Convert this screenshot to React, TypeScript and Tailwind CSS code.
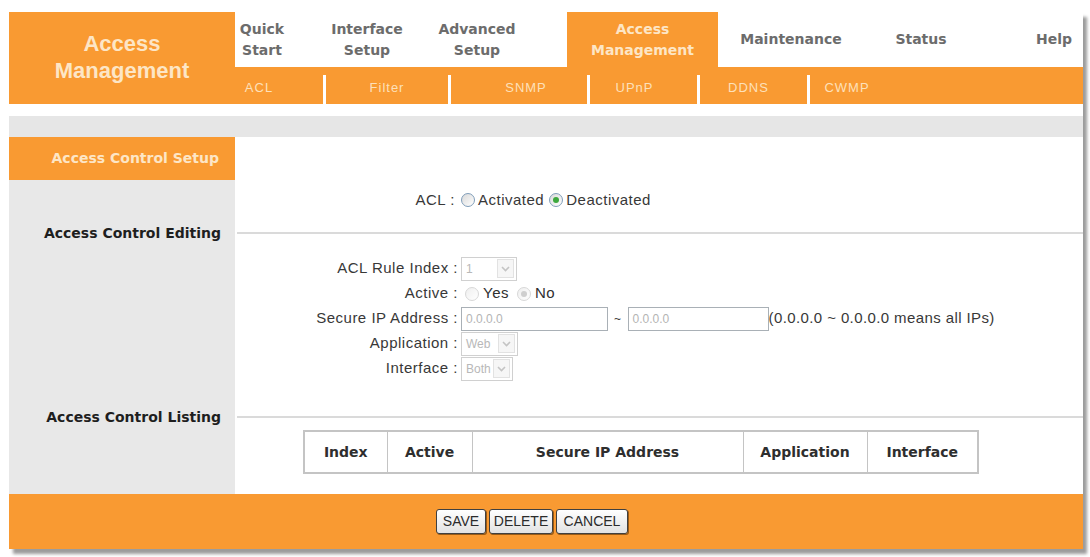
import clsx from "clsx";

const tabs = [
  { lines: ["Quick", "Start"], cell: "w-[65px] pr-[11px]" },
  { lines: ["Interface", "Setup"], cell: "w-[134px]" },
  { lines: ["Advanced", "Setup"], cell: "w-[86px]" },
];

const subTabs = [
  { label: "ACL", cell: "w-[88px] pr-[40px]" },
  { label: "Filter", cell: "w-[122px]" },
  { label: "SNMP", cell: "w-[136px] pl-[14px]" },
  { label: "UPnP", cell: "w-[107px] pr-[18px]" },
  { label: "DDNS", cell: "w-[107px] pr-[10px]" },
  { label: "CWMP", cell: "w-[88px] pr-[14px]" },
];

const columns = [
  { label: "Index", w: "w-[83px]" },
  { label: "Active", w: "w-[85px]" },
  { label: "Secure IP Address", w: "w-[271px]" },
  { label: "Application", w: "w-[124px]" },
  { label: "Interface", w: "w-[111px]" },
];

function Radio({ checked, disabled }: { checked?: boolean; disabled?: boolean }) {
  return (
    <span
      className={clsx(
        "inline-flex h-[14px] w-[14px] shrink-0 items-center justify-center rounded-full border bg-linear-to-br from-[#d9d9d9] to-white",
        disabled ? "border-[#d8d8d8] from-[#efefef]" : "border-[#7f9db9]"
      )}
    >
      {checked && (
        <span
          className={clsx(
            "h-[6px] w-[6px] rounded-full",
            disabled ? "bg-[#cfcfcf]" : "bg-[#3da83d]"
          )}
        />
      )}
    </span>
  );
}

function Select({ value, className }: { value: string; className: string }) {
  return (
    <span
      className={clsx(
        "flex h-[24px] items-center justify-between border border-[#d0d0d0] bg-white pl-[4px] pr-[2px] text-[12px] tracking-normal text-[#b8b8b8]",
        className
      )}
    >
      {value}
      <span className="flex h-[19px] w-[17px] items-center justify-center border border-[#e2e2e2] bg-[#f6f6f6]">
        <svg width="9" height="6" viewBox="0 0 9 6">
          <path d="M1 1l3.5 3.5L8 1" fill="none" stroke="#c4c4c4" strokeWidth="1.6" />
        </svg>
      </span>
    </span>
  );
}

function TextBox({ className }: { className: string }) {
  return (
    <span
      className={clsx(
        "flex h-[24px] items-center border border-[#a9b0b6] bg-white pl-[4px] text-[12px] tracking-normal text-[#b4b4b4]",
        className
      )}
    >
      0.0.0.0
    </span>
  );
}

function FormRow({ label, children }: { label: string; children: React.ReactNode }) {
  return (
    <div className="flex h-[25px] items-center">
      <span className="w-[226px] shrink-0 pr-[3px] text-right">{label}</span>
      <div className="flex items-center">{children}</div>
    </div>
  );
}

function Button({ label, w }: { label: string; w: string }) {
  return (
    <button
      className={clsx(
        "h-[25px] rounded-[3px] border border-[#404040] bg-linear-to-b from-white to-[#e2e2e2] text-[14px] text-[#2b2b2b] shadow-[1px_1px_0_#9a5a14]",
        w
      )}
    >
      {label}
    </button>
  );
}

export default function App() {
  return (
    <div className="min-h-screen bg-white pl-[9px] pt-[12px] font-['Liberation_Sans',Arial,sans-serif]">
      <div className="w-[1074px] shadow-[4px_5px_3px_#9c9c9c]">
        {/* top banner + main menu */}
        <div className="flex h-[92px]">
          <div className="flex w-[226px] items-center justify-center bg-[#f99a32] pb-[2px] text-center text-[22px] font-bold leading-[27px] text-[#fde6c6]">
            Access
            <br />
            Management
          </div>
          <div className="flex flex-1 flex-col">
            <div className="flex h-[55px] bg-white font-['DejaVu_Sans',Verdana,sans-serif] text-[14px] font-bold leading-[21px] text-[#6c6c6c]">
              {tabs.map((t) => (
                <div key={t.lines[0]} className={clsx("flex flex-col items-center justify-center whitespace-nowrap", t.cell)}>
                  {t.lines.map((l) => (
                    <span key={l}>{l}</span>
                  ))}
                </div>
              ))}
              <div className="w-[47px]" />
              <div className="flex w-[151px] flex-col items-center justify-center bg-[#f99a32] text-[#fde6c6]">
                <span>Access</span>
                <span>Management</span>
              </div>
              <div className="flex w-[146px] items-center justify-center">Maintenance</div>
              <div className="flex w-[114px] items-center justify-center">Status</div>
              <div className="flex flex-1 items-center justify-end pr-[11px]">Help</div>
            </div>
            <div className="flex h-[37px] bg-[#f99a32] text-[13px] tracking-[1px] text-[#fde0ba]">
              {subTabs.map((s, i) => (
                <div key={s.label} className="flex">
                  {i > 0 && <span className="mt-[8px] w-[3px] bg-white" />}
                  <span className={clsx("flex items-center justify-center pt-[4px]", s.cell)}>{s.label}</span>
                </div>
              ))}
            </div>
          </div>
        </div>

        <div className="h-[12px] bg-white" />
        <div className="h-[21px] bg-[#e6e6e6]" />

        {/* page body */}
        <div className="flex">
          <div className="flex w-[226px] shrink-0 flex-col bg-[#e8e8e8] font-['DejaVu_Sans',Verdana,sans-serif] text-[14px] font-bold">
            <div className="flex h-[43px] items-center justify-end bg-[#f99a32] pr-[16px] text-[#fde6c6]">
              Access Control Setup
            </div>
            <div className="h-[40px]" />
            <div className="flex h-[26px] items-center justify-end pr-[14px] text-[#1e1e1e]">
              Access Control Editing
            </div>
            <div className="h-[158px]" />
            <div className="flex h-[26px] items-center justify-end pr-[14px] text-[#1e1e1e]">
              Access Control Listing
            </div>
            <div className="h-[64px]" />
          </div>

          <div className="flex-1 bg-white text-[15px] tracking-[0.5px] text-[#383838]">
            <div className="h-[43px]" />
            <div className="flex h-[40px] items-center">
              <span className="w-[226px] shrink-0 pr-[6px] text-right">ACL :</span>
              <div className="flex items-center gap-[3px]">
                <Radio />
                <span className="mr-[2px]">Activated</span>
                <Radio checked />
                <span>Deactivated</span>
              </div>
            </div>
            <div className="flex h-[26px] items-center pl-[2px]">
              <div className="h-[2px] w-full bg-[#dadada]" />
            </div>

            <div className="h-[158px] pt-[10px]">
              <FormRow label="ACL Rule Index :">
                <Select value="1" className="w-[56px]" />
              </FormRow>
              <FormRow label="Active :">
                <span className="ml-[4px] flex items-center gap-[4px] text-[#303030]">
                  <Radio disabled />
                  <span className="mr-[4px]">Yes</span>
                  <Radio disabled checked />
                  <span>No</span>
                </span>
              </FormRow>
              <FormRow label="Secure IP Address :">
                <TextBox className="w-[147px]" />
                <span className="mx-[6px] text-[12px]">~</span>
                <TextBox className="w-[141px]" />
                <span className="whitespace-nowrap tracking-[0.4px]">(0.0.0.0 ~ 0.0.0.0 means all IPs)</span>
              </FormRow>
              <FormRow label="Application :">
                <Select value="Web" className="w-[57px]" />
              </FormRow>
              <FormRow label="Interface :">
                <Select value="Both" className="w-[52px]" />
              </FormRow>
            </div>

            <div className="flex h-[26px] items-center pl-[2px]">
              <div className="h-[2px] w-full bg-[#dadada]" />
            </div>
            <div className="h-[64px] pl-[68px]">
              <table className="border-collapse border-2 border-[#c4c4c4] font-['DejaVu_Sans',Verdana,sans-serif] text-[14px] font-bold tracking-normal text-[#2e2e2e]">
                <thead>
                  <tr className="h-[42px]">
                    {columns.map((c) => (
                      <th key={c.label} className={clsx("border border-[#c4c4c4] text-center font-bold", c.w)}>
                        {c.label}
                      </th>
                    ))}
                  </tr>
                </thead>
              </table>
            </div>
          </div>
        </div>

        {/* action buttons */}
        <div className="flex h-[55px] items-center gap-[3px] bg-[#f99a32] pl-[427px]">
          <Button label="SAVE" w="w-[50px]" />
          <Button label="DELETE" w="w-[64px]" />
          <Button label="CANCEL" w="w-[72px]" />
        </div>
      </div>
    </div>
  );
}
